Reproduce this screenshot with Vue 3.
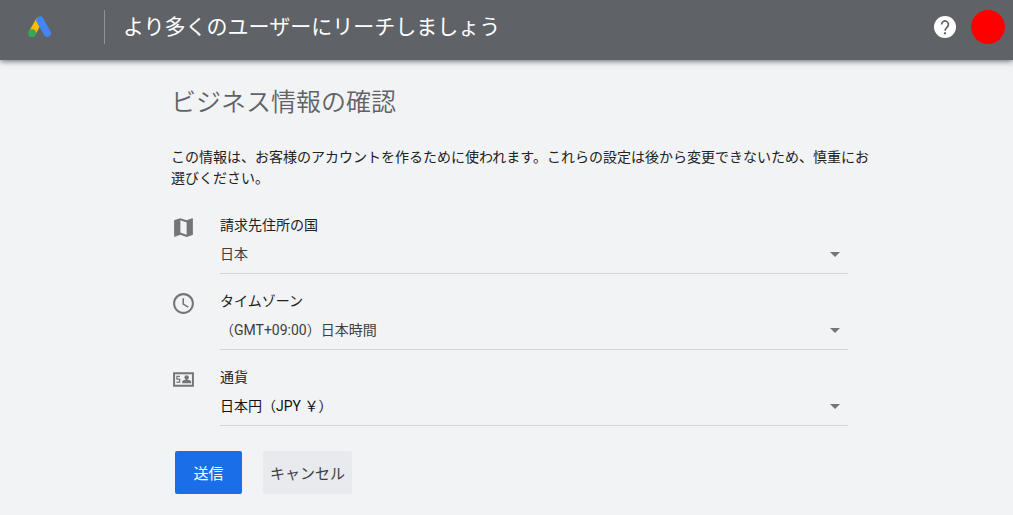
<script setup>
import { ref } from 'vue'

const country = ref('日本')
const timezone = ref('（GMT+09:00）日本時間')
const currency = ref('日本円（JPY ￥）')
</script>

<template>
  <div class="page">
    <header class="bar">
      <svg class="logo" viewBox="0 0 24 22" aria-hidden="true">
        <path d="M11.6 3.6 4.2 17" stroke="#fbbc04" stroke-width="7" />
        <path d="M11.9 4.1 19.3 17.1" stroke="#4285f4" stroke-width="7.4" stroke-linecap="round" />
        <circle cx="4.1" cy="17.2" r="3.9" fill="#34a853" />
      </svg>
      <span class="divider"></span>
      <div class="bar-title">より多くのユーザーにリーチしましょう</div>
      <button class="help" type="button" aria-label="ヘルプ">
        <svg viewBox="0 0 24 24" aria-hidden="true">
          <circle cx="12" cy="12" r="11" fill="#fff" />
          <path d="M8.600 9.400a3.400 3.400 0 1 1 5.900 2.300c-1.400 1.400-2.400 2-2.400 4" fill="none" stroke="#5f6368" stroke-width="1.700" />
          <rect x="11" y="17.300" width="2" height="2" fill="#5f6368" />
        </svg>
      </button>
      <button class="avatar" type="button" aria-label="アカウント"></button>
    </header>

    <main class="content">
      <h1>ビジネス情報の確認</h1>
      <p class="lead">
        この情報は、お客様のアカウントを作るために使われます。これらの設定は後から変更できないため、慎重にお選びください。
      </p>

      <form @submit.prevent>
        <div class="row">
          <svg class="icon" viewBox="0 0 24 24" aria-hidden="true">
            <path
              d="M20.500 3l-.160.030L15 5.100 9 3 3.360 4.900c-.210.070-.360.250-.360.480V20.500c0 .280.220.500.500.500l.160-.030L9 18.900l6 2.100 5.640-1.900c.210-.070.360-.250.360-.480V3.500c0-.280-.220-.500-.500-.500zM15 19l-6-2.110V5l6 2.110V19z"
            />
          </svg>
          <div class="field">
            <label for="country">請求先住所の国</label>
            <div class="select-box">
              <select id="country" v-model="country">
                <option>日本</option>
              </select>
              <svg class="arrow" viewBox="0 0 24 24" aria-hidden="true"><path d="M7 10l5 5 5-5z" /></svg>
            </div>
          </div>
        </div>

        <div class="row">
          <svg class="icon" viewBox="0 0 24 24" aria-hidden="true">
            <path
              d="M11.990 2C6.470 2 2 6.480 2 12s4.470 10 9.990 10C17.520 22 22 17.520 22 12S17.520 2 11.990 2zM12 20c-4.420 0-8-3.580-8-8s3.580-8 8-8 8 3.580 8 8-3.580 8-8 8zM12.500 7H11v6l5.250 3.150.750-1.230-4.500-2.670z"
            />
          </svg>
          <div class="field">
            <label for="timezone">タイムゾーン</label>
            <div class="select-box">
              <select id="timezone" v-model="timezone">
                <option>（GMT+09:00）日本時間</option>
              </select>
              <svg class="arrow" viewBox="0 0 24 24" aria-hidden="true"><path d="M7 10l5 5 5-5z" /></svg>
            </div>
          </div>
        </div>

        <div class="row">
          <svg class="icon" viewBox="0 0 24 24" aria-hidden="true">
            <path fill-rule="evenodd" d="M2 5h20v14H2zM3.900 6.900v10.200h16.200V6.900z" />
            <path d="M8.600 9H5.700v2.600h2.600v2.900H5.200" fill="none" stroke="#757575" stroke-width="1.200" />
            <circle cx="15" cy="9.900" r="2.100" />
            <path d="M14 11h2v1.300c2.100.200 3.300.900 3.300 2.100V15.600h-8.600v-1.200c0-1.200 1.200-1.900 3.300-2.100z" />
          </svg>
          <div class="field">
            <label for="currency">通貨</label>
            <div class="select-box strong">
              <select id="currency" v-model="currency">
                <option>日本円（JPY ￥）</option>
              </select>
              <svg class="arrow" viewBox="0 0 24 24" aria-hidden="true"><path d="M7 10l5 5 5-5z" /></svg>
            </div>
          </div>
        </div>

        <div class="actions">
          <button class="btn primary" type="submit">送信</button>
          <button class="btn" type="button">キャンセル</button>
        </div>
      </form>
    </main>
  </div>
</template>

<style>
body {
  margin: 0;
  background: #f1f3f5;
}
</style>

<style scoped>
.page {
  font-family: Roboto, "Noto Sans CJK JP", sans-serif;
  font-size: 14px;
  color: #212121;
}

.bar {
  display: flex;
  align-items: center;
  box-sizing: border-box;
  height: 60px;
  padding: 0 8px 6px 28px;
  background: #5f6368;
  box-shadow: 0 1px 6px rgba(0, 0, 0, 0.6);
}

.logo {
  width: 24px;
  height: 22px;
  fill: none;
}

.divider {
  width: 1px;
  height: 34px;
  margin: 0 18px 0 52px;
  background: #909396;
}

.bar-title {
  flex: 1;
  font-size: 21px;
  line-height: 32px;
  color: #fff;
}

.help,
.avatar {
  flex: none;
  padding: 0;
  border: 0;
  border-radius: 50%;
  background: none;
}

.help {
  width: 24px;
  height: 24px;
  margin-right: 14px;
}

.help svg {
  display: block;
}

.avatar {
  width: 34px;
  height: 34px;
  background: #f00;
}

.content {
  box-sizing: border-box;
  max-width: 683px;
  margin: 0 auto;
  padding: 24px 0 20px 6px;
}

h1 {
  margin: 0 0 31px;
  font-family: "Noto Sans CJK JP", sans-serif;
  font-size: 25px;
  font-weight: 350;
  line-height: 32px;
  color: #5f6368;
}

.lead {
  margin: 0 -24px 26px 0;
  line-height: 21px;
}

.row {
  display: grid;
  grid-template-columns: 25px 1fr;
  column-gap: 24px;
  margin-bottom: 17px;
}

.icon {
  width: 25px;
  height: 25px;
  fill: #757575;
}

label {
  display: block;
  line-height: 20px;
}

.select-box {
  display: grid;
  align-items: center;
  border-bottom: 1px solid #d3d5d8;
  color: #3c4043;
}

.select-box.strong {
  color: #111;
}

select {
  grid-area: 1 / 1;
  width: 100%;
  height: 38px;
  padding: 0;
  border: 0;
  appearance: none;
  background: none;
  font: inherit;
  color: inherit;
}

.arrow {
  grid-area: 1 / 1;
  justify-self: end;
  width: 24px;
  height: 24px;
  margin-right: 1px;
  fill: #757575;
  pointer-events: none;
}

.actions {
  display: flex;
  gap: 21px;
  margin-top: 25px;
  padding-left: 4px;
}

.btn {
  min-width: 67px;
  height: 43px;
  padding: 0 7px;
  border: 0;
  border-radius: 2px;
  background: #e8eaed;
  font: inherit;
  font-size: 15px;
  color: #3c4043;
}

.btn.primary {
  background: #1a6fe8;
  color: #fff;
}
</style>
